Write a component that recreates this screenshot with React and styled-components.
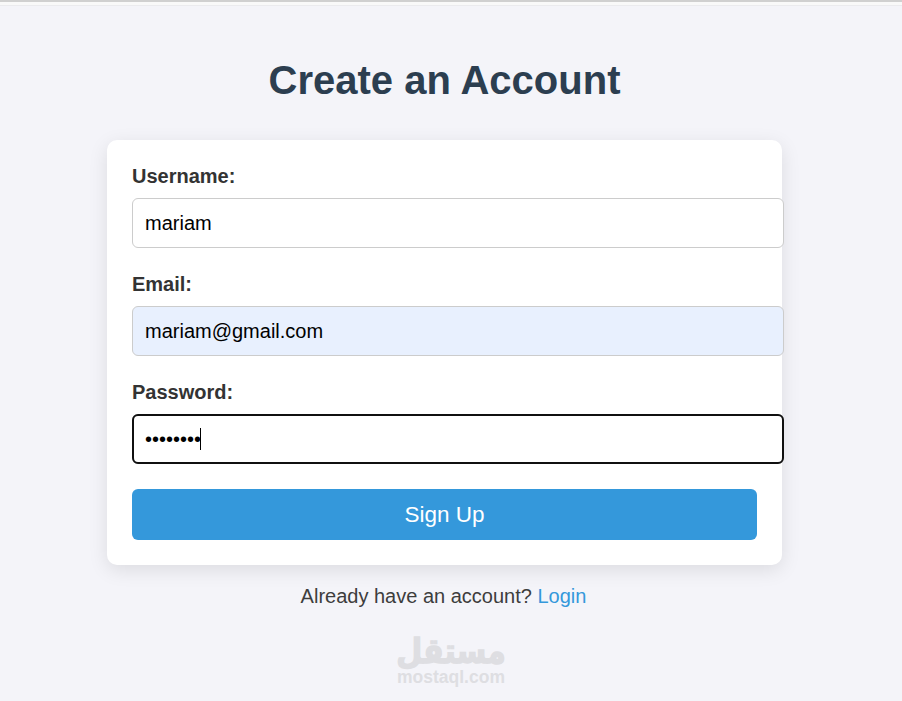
import React from "react";
import styled, { createGlobalStyle } from "styled-components";

const GlobalStyle = createGlobalStyle`
  html, body {
    margin: 0;
    padding: 0;
    background: #f4f4f9;
    font-family: "Liberation Sans", Arial, sans-serif;
  }
`;

const Page = styled.div`
  height: 701px;
  overflow: hidden;
  display: flex;
  flex-direction: column;
  border-top: 2px solid #d0d0d0;
  box-sizing: border-box;
`;

const TopStrip = styled.div`
  height: 3px;
  background: #f9f9f9;
  border-bottom: 1px solid #ebebee;
`;

const Content = styled.main`
  width: 889px;
  display: flex;
  flex-direction: column;
  align-items: center;
`;

const Title = styled.h1`
  margin: 51px 0 0;
  font-size: 40px;
  line-height: 46px;
  font-weight: 700;
  color: #2c3e50;
  text-align: center;
`;

const Card = styled.form`
  margin-top: 37px;
  width: 675px;
  box-sizing: border-box;
  padding: 25px;
  background: #fff;
  border-radius: 10px;
  box-shadow: 0 5px 19px rgba(0, 0, 0, 0.1);
`;

const Label = styled.label`
  display: block;
  font-size: 20px;
  line-height: 23px;
  font-weight: 700;
  color: #333;
  margin-bottom: 10px;
`;

const Field = styled.div`
  position: relative;
  margin-bottom: 25px;
`;

const Input = styled.input`
  display: block;
  box-sizing: content-box;
  width: calc(100% + 1px);
  height: 23px;
  padding: 12.5px 12px;
  margin: 0;
  font-family: inherit;
  font-size: 20px;
  color: #000;
  caret-color: transparent;
  background: ${(props) => (props.$filled ? "#e8f0fe" : "#fff")};
  border: 1px solid #ccc;
  border-radius: 6px;

  &:focus {
    outline: 2px solid #101010;
    outline-offset: -2px;
  }
`;

const Caret = styled.span`
  position: absolute;
  left: 68px;
  top: 14px;
  width: 1px;
  height: 22px;
  background: #000;
`;

const SubmitButton = styled.button`
  display: block;
  width: 100%;
  height: 51px;
  padding: 0;
  font-family: inherit;
  font-size: 22.5px;
  color: #fff;
  background: #3498db;
  border: none;
  border-radius: 6px;
`;

const Footer = styled.p`
  margin: 19px 2px 0 0;
  font-size: 20px;
  line-height: 25px;
  color: #3d3d3d;
  text-align: center;
`;

const LoginLink = styled.a`
  color: #3498db;
  text-decoration: none;
`;

const Watermark = styled.div`
  margin: 25px 0 0 13px;
  display: flex;
  flex-direction: column;
  align-items: center;
  color: #dedee2;
  font-weight: 700;
`;

const WatermarkArabic = styled.span`
  font-family: "DejaVu Sans", sans-serif;
  font-size: 30px;
  line-height: 34px;
  -webkit-text-stroke: 1.2px #dedee2;
  transform: scaleY(1.15);
`;

const WatermarkLatin = styled.span`
  font-size: 17.5px;
  line-height: 18px;
`;

export default function App() {
  return (
    <>
      <GlobalStyle />
      <Page>
        <TopStrip />
        <Content>
          <Title>Create an Account</Title>
          <Card onSubmit={(e) => e.preventDefault()}>
            <Label htmlFor="username">Username:</Label>
            <Field>
              <Input id="username" type="text" defaultValue="mariam" />
            </Field>
            <Label htmlFor="email">Email:</Label>
            <Field>
              <Input id="email" type="email" defaultValue="mariam@gmail.com" $filled />
            </Field>
            <Label htmlFor="password">Password:</Label>
            <Field>
              <Input id="password" type="password" defaultValue="mariam12" autoFocus />
              <Caret />
            </Field>
            <SubmitButton type="submit">Sign Up</SubmitButton>
          </Card>
          <Footer>
            Already have an account? <LoginLink href="#">Login</LoginLink>
          </Footer>
          <Watermark>
            <WatermarkArabic>مستقل</WatermarkArabic>
            <WatermarkLatin>mostaql.com</WatermarkLatin>
          </Watermark>
        </Content>
      </Page>
    </>
  );
}
